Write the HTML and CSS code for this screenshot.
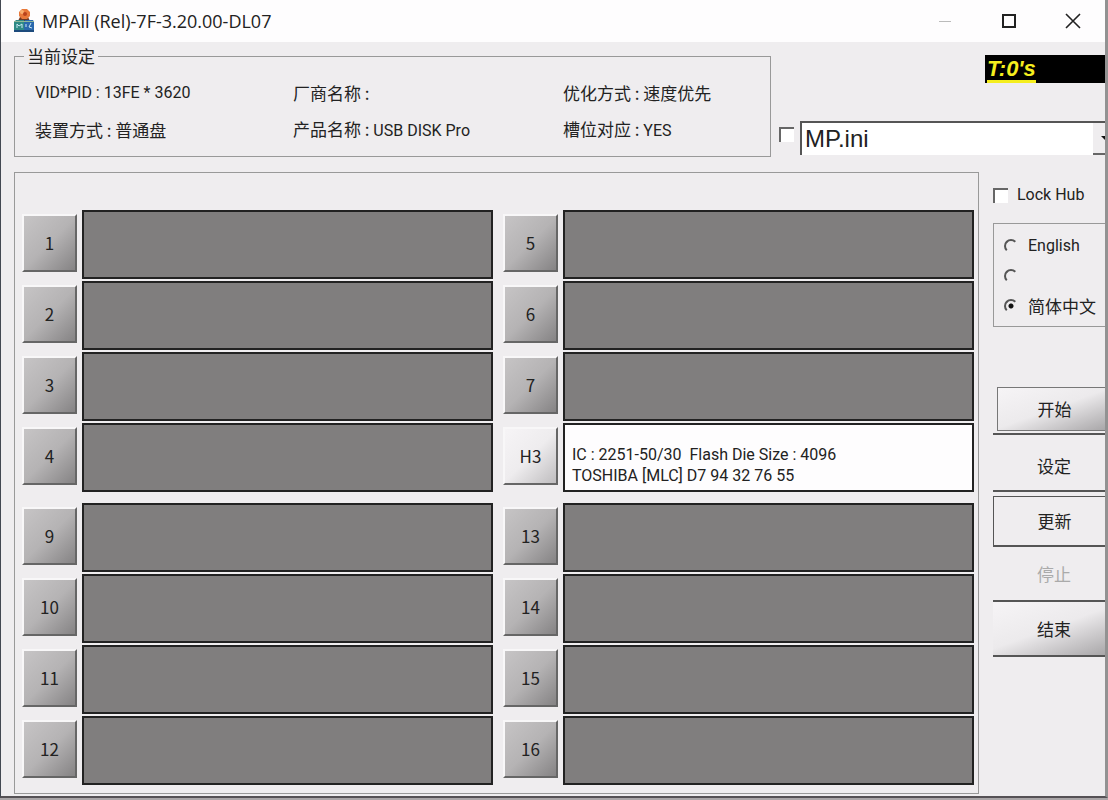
FILE: index.html
```
<!DOCTYPE html>
<html lang="zh-CN">
<head>
    <meta charset="UTF-8">
    <meta name="viewport" content="width=device-width, initial-scale=1.0">
    <title>MPAll (Rel)-7F-3.20.00-DL07</title>
    <link rel="stylesheet" href="styles.css">
</head>
<body>

<div class="window">
    <header class="title-bar">
        <svg class="app-icon" viewBox="0 0 22 24" aria-hidden="true">
            <path d="M5 12 L7 8 H15 L17 12 Z" fill="#6d3a26"/>
            <path d="M6 3 L9 0 H14 L17 3 V7 L14 10 H9 L6 7 Z" fill="#e8793a"/>
            <circle cx="9" cy="3" r="2" fill="#f9b070"/>
            <circle cx="12" cy="5" r="2" fill="#b8421c"/>
            <path d="M1 13 L3 11 H11 V22 H1 Z" fill="#2f8a86"/>
            <path d="M11 13 L12 11 H20 L21 13 V22 H11 Z" fill="#2a68ad"/>
            <path d="M1 12.5 H21" stroke="#8fb89a" stroke-width="1"/>
            <path d="M4 19 V15 L6 17 L9 15 V19 M13 15 V18 M18 14 L16 18 L19 19" fill="none" stroke="#c9e8f4" stroke-width="1"/>
            <path d="M1 22 H21" stroke="#1d4a7c" stroke-width="2"/>
        </svg>
        <h1>MPAll (Rel)-7F-3.20.00-DL07</h1>
        <div class="window-controls">
            <button class="minimize" aria-label="Minimize" disabled>
                <svg width="16" height="16" viewBox="0 0 16 16"><path d="M2 8.5 H14" stroke="#bbb"/></svg>
            </button>
            <button aria-label="Maximize">
                <svg width="16" height="16" viewBox="0 0 16 16"><rect x="2" y="2" width="12" height="12" fill="none" stroke="#222" stroke-width="2"/></svg>
            </button>
            <button aria-label="Close">
                <svg width="16" height="16" viewBox="0 0 16 16"><path d="M1 1 L15 15 M15 1 L1 15" stroke="#222" stroke-width="1.6"/></svg>
            </button>
        </div>
    </header>

    <section class="top">
        <fieldset class="settings">
            <legend>当前设定</legend>
            <span class="latin">VID*PID : 13FE * 3620</span>
            <span>厂商名称 :</span>
            <span>优化方式 : 速度优先</span>
            <span>装置方式 : 普通盘</span>
            <span>产品名称 : <span class="latin">USB DISK Pro</span></span>
            <span>槽位对应 : <span class="latin">YES</span></span>
        </fieldset>
        <div class="config">
            <div class="timer"><span>T:0's</span></div>
            <div class="ini-row">
                <input type="checkbox" class="check" aria-label="Use ini file">
                <select class="ini-select" aria-label="Ini file">
                    <option>MP.ini</option>
                </select>
                <span class="ini-arrow"></span>
            </div>
        </div>
    </section>

    <main class="content">
        <section class="ports">
            <div class="bank">
                <div class="slot"><button>1</button><div class="status"></div></div>
                <div class="slot"><button>2</button><div class="status"></div></div>
                <div class="slot"><button>3</button><div class="status"></div></div>
                <div class="slot"><button>4</button><div class="status"></div></div>
            </div>
            <div class="bank">
                <div class="slot"><button>5</button><div class="status"></div></div>
                <div class="slot"><button>6</button><div class="status"></div></div>
                <div class="slot"><button>7</button><div class="status"></div></div>
                <div class="slot active">
                    <button>H3</button>
                    <div class="status latin">IC : 2251-50/30&nbsp; Flash Die Size : 4096<br>TOSHIBA [MLC] D7 94 32 76 55</div>
                </div>
            </div>
            <div class="bank">
                <div class="slot"><button>9</button><div class="status"></div></div>
                <div class="slot"><button>10</button><div class="status"></div></div>
                <div class="slot"><button>11</button><div class="status"></div></div>
                <div class="slot"><button>12</button><div class="status"></div></div>
            </div>
            <div class="bank">
                <div class="slot"><button>13</button><div class="status"></div></div>
                <div class="slot"><button>14</button><div class="status"></div></div>
                <div class="slot"><button>15</button><div class="status"></div></div>
                <div class="slot"><button>16</button><div class="status"></div></div>
            </div>
        </section>

        <aside class="sidebar">
            <label class="lock latin"><input type="checkbox" class="check"> Lock Hub</label>
            <div class="languages">
                <label class="latin"><input type="radio" name="lang"> English</label>
                <label><input type="radio" name="lang" aria-label="Other language"></label>
                <label><input type="radio" name="lang" checked> 简体中文</label>
            </div>
            <div class="actions">
                <button class="start"><span>开始</span></button>
                <button class="setup">设定</button>
                <button class="refresh">更新</button>
                <button class="stop" disabled>停止</button>
                <button class="quit">结束</button>
            </div>
        </aside>
    </main>
</div>

</body>
</html>
```
FILE: styles.css
```
* {
    box-sizing: border-box;
}

body {
    margin: 0;
    background: #aaa6a8;
    color: #222;
    font-family: 'Noto Sans CJK SC', sans-serif;
    font-size: 17px;
    line-height: 20px;
}

button, input, select {
    margin: 0;
    font: inherit;
    color: inherit;
}

.latin {
    font-family: Roboto, sans-serif;
    font-size: 16px;
}

.window {
    display: flex;
    flex-direction: column;
    min-height: calc(100vh - 2px);
    background: #efedef;
    border-left: 1px solid #434852;
    border-right: 3px solid #929292;
    border-bottom: 2px solid #555155;
}

/* title bar */

.title-bar {
    display: flex;
    align-items: center;
    height: 42px;
    padding-left: 12px;
    background: #fefdfe;
}

.app-icon {
    width: 22px;
    height: 24px;
}

.title-bar h1 {
    flex: 1;
    margin: 0 0 0 7px;
    font-family: 'Open Sans', sans-serif;
    font-size: 18px;
    font-weight: normal;
}

.window-controls {
    display: flex;
}

.window-controls button {
    display: flex;
    align-items: center;
    justify-content: center;
    width: 64px;
    height: 40px;
    padding: 0;
    border: none;
    background: none;
}

/* current settings */

.top {
    display: flex;
    padding: 4px 0 0 13px;
}

.settings {
    flex: 1;
    display: grid;
    grid-template-columns: 258px 270px 1fr;
    row-gap: 16px;
    min-width: 0;
    height: 111px;
    margin: 0;
    padding: 17px 0 0 20px;
    border: 1px solid #999;
    align-content: start;
    align-items: center;
}

.settings legend {
    margin-left: -11px;
    padding: 0 3px;
}

.config {
    width: 334px;
    padding-top: 9px;
}

.timer {
    width: 120px;
    height: 28px;
    margin-left: auto;
    padding-left: 2px;
    background: #000;
    color: #f5ee1e;
    font-family: 'Liberation Sans', sans-serif;
    font-size: 22px;
    font-weight: bold;
    font-style: italic;
    line-height: 28px;
}

.timer span {
    display: inline-block;
    height: 28px;
    border-bottom: 3px solid #f5ee1e;
}

.ini-row {
    display: flex;
    margin: 38px 0 0 8px;
}

.check {
    appearance: none;
    width: 15px;
    height: 15px;
    background: #fff;
    border: 2px solid #666;
    border-right: none;
    border-bottom: none;
}

.ini-row .check {
    margin: 6px 6px 0 0;
}

.ini-select {
    appearance: none;
    flex: 1;
    height: 34px;
    padding: 0 3px;
    border: 2px solid #555;
    border-right: none;
    border-bottom: none;
    border-radius: 0;
    background: #fff;
    font-family: 'Liberation Sans', sans-serif;
    font-size: 24px;
}

.ini-arrow {
    display: flex;
    align-items: center;
    justify-content: flex-end;
    width: 12px;
    border-top: 2px solid #555;
    border-bottom: 2px solid #666;
    background: #efedef;
}

.ini-arrow::after {
    content: "";
    border-top: 4px solid #111;
    border-left: 4px solid transparent;
}

/* ports */

.content {
    flex: 1;
    display: flex;
    padding: 15px 0 2px 13px;
}

.ports {
    flex: 1;
    display: grid;
    grid-template-columns: 1fr 1fr;
    gap: 11px 10px;
    align-content: start;
    padding: 37px 4px 8px 7px;
    border: 1px solid #999;
}

.bank {
    display: grid;
    gap: 2px;
}

.slot {
    display: flex;
    gap: 5px;
    height: 69px;
}

.slot button {
    width: 55px;
    height: 58px;
    margin-top: 4px;
    padding: 0;
    border: 2px solid #f8f7f8;
    border-right-color: #666;
    border-bottom-color: #666;
    background: linear-gradient(135deg, #c6c4c5 0%, #b5b3b4 50%, #858384 100%);
}

.status {
    flex: 1;
    padding: 19px 7px 0;
    border: 2px solid #222;
    background: #807e7e;
    line-height: 21px;
    white-space: nowrap;
}

.active .status {
    background: #fefdfe;
}

.active button {
    background: linear-gradient(135deg, #f6f4f6 0%, #eeecee 50%, #bfbdbf 100%);
}

/* sidebar */

.sidebar {
    width: 126px;
    padding: 13px 0 0 14px;
}

.lock {
    display: flex;
    align-items: center;
    gap: 9px;
}

.languages {
    display: grid;
    gap: 10px;
    margin-top: 18px;
    padding: 12px 0 10px 10px;
    border: 1px solid #999;
    border-right: none;
}

.languages label {
    display: flex;
    align-items: center;
    gap: 10px;
    min-height: 20px;
    white-space: nowrap;
}

.languages input {
    appearance: none;
    width: 14px;
    height: 14px;
    border: 2px solid #555;
    border-right-color: transparent;
    border-bottom-color: transparent;
    border-radius: 50%;
}

.languages input:checked {
    background: radial-gradient(circle, #111 2px, transparent 3px) padding-box no-repeat;
}

.actions {
    display: flex;
    flex-direction: column;
    margin-top: 60px;
}

.actions button {
    height: 55px;
    padding: 0 0 0 10px;
    border: none;
    border-bottom: 2px solid #555;
    background: #efedef;
}

.actions .start {
    height: 48px;
    padding: 0 0 3px 4px;
}

.start span {
    display: flex;
    align-items: center;
    justify-content: center;
    height: 44px;
    padding-left: 6px;
    border: 1px solid #777;
    border-right: none;
}

.actions .start span, .actions .quit {
    background: linear-gradient(160deg, #f6f4f6 0%, #eceaec 50%, #a9a7a9 100%);
}

.actions .setup {
    height: 57px;
    padding-top: 6px;
}

.actions .refresh {
    height: 51px;
    margin-top: 4px;
    border: 1px solid #555;
    border-right: none;
    border-bottom-width: 2px;
}

.actions .stop {
    color: #aaa;
}
```
